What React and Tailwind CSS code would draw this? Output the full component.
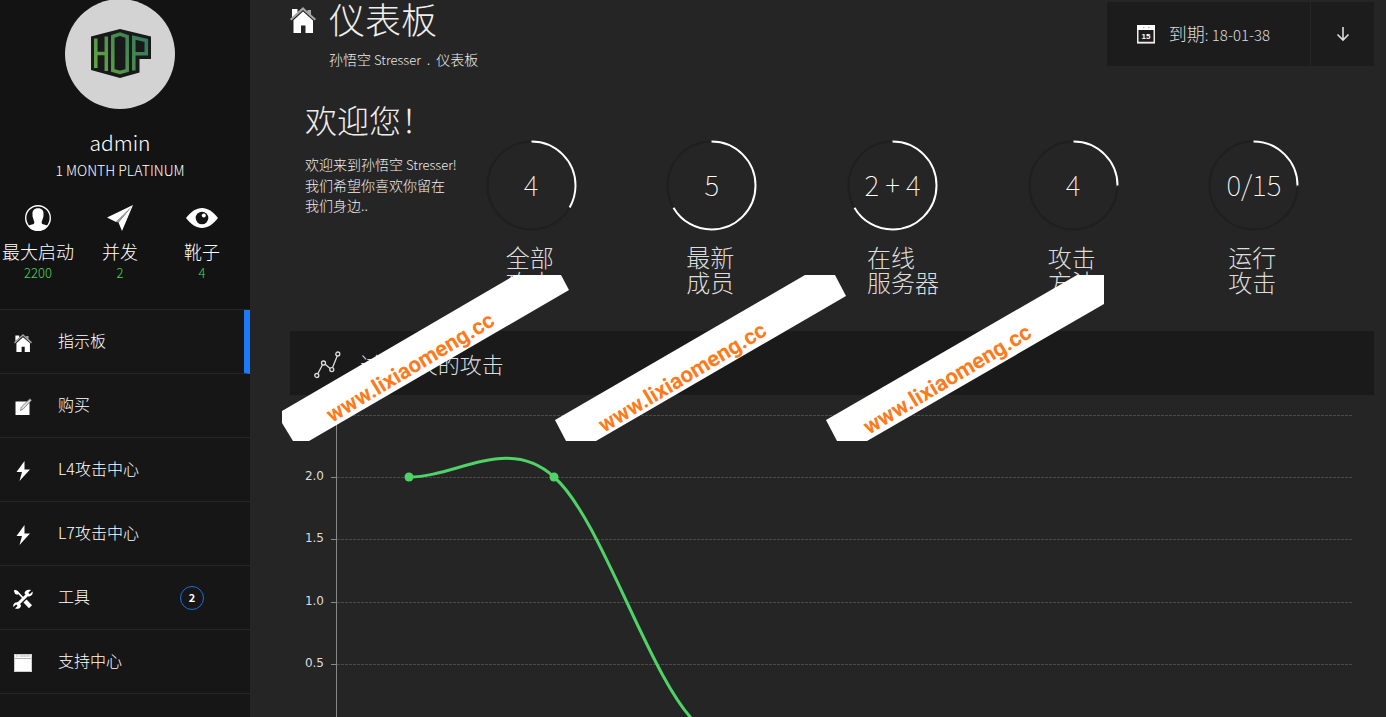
import React from 'react';

const HomeIcon = ({ className }) => (
  <svg viewBox="0 0 26 26" className={className} fill="currentColor" aria-hidden="true">
    <path d="M13 0 0 12l1.400 1.600L13 3l11.600 10.600L26 12l-5-4.600V3h-3.500v1.500z" opacity=".6" />
    <path d="M2 2h5.500v3.200L2 10.200z" />
    <path d="M13 4.600 3.500 13.200V26H11v-7.500h4.500V26h7.500V13.400z" />
  </svg>
);

const EditIcon = ({ className }) => (
  <svg viewBox="0 0 18 18" className={className} aria-hidden="true">
    <path d="M1.500 3.500h14V17h-14z" fill="#fff" />
    <path d="M6.500 12.500l.8-3.500L16 .8l1.400 1.400-8.300 9z" fill="#ddd" stroke="#777" strokeWidth=".8" />
  </svg>
);

const BoltIcon = ({ className }) => (
  <svg viewBox="0 0 18 20" className={className} fill="currentColor" aria-hidden="true">
    <path d="M10.500 0 2.500 11H8L5.500 20 16 8.500h-5.500z" />
  </svg>
);

const ToolsIcon = ({ className }) => (
  <svg viewBox="0 0 20 20" className={className} aria-hidden="true">
    <path d="M2 2l2 .5L11 10" stroke="#fff" strokeWidth="1.800" fill="none" />
    <path d="M.8 1.800 2 .8l3.200 2L5.600 5l-1.400.8-2-.8z" fill="#fff" />
    <path d="M12 12l5.500 5.800" stroke="#fff" strokeWidth="4.200" />
    <path d="M4 16 15.500 4.500" stroke="#fff" strokeWidth="3" />
    <path
      d="M18 1 15.500 3.500l.3 1.200 1.200.3 2.500-2.500c1 3.500-2 5.500-4.800 4.700L11.500 4.500C11.500 1.500 15 0 18 1zM2 19.500l2.500-2.500-.3-1.200-1.200-.3L.4 18c-1-3 2-5.500 4.800-4.700l2.700 2.700C8.500 19 5 20.500 2 19.500z"
      fill="#fff"
    />
  </svg>
);

const WindowIcon = ({ className }) => (
  <svg viewBox="0 0 18 18" className={className} aria-hidden="true">
    <path d="M0 0h18v18H0z" fill="#fff" />
    <path d="M0 4.500h18M2 2h2M5.500 2H16" stroke="#aaa" strokeWidth=".9" />
    <path d="M.5 .5h17v17H.5z" fill="none" stroke="#ccc" />
  </svg>
);

const UserIcon = ({ className }) => (
  <svg viewBox="0 0 26 26" className={className} aria-hidden="true">
    <circle cx="13" cy="13" r="12.300" fill="none" stroke="#fff" strokeWidth="1.400" />
    <path
      d="M13 3.200c-4 0-5.800 2.600-5.500 6 .1 1.200-.2 1.700.3 3 .4 1 .8 3 1.400 4.200.5 1.800-.4 2.800-2.300 3.200L3 20.700C6 25 9.500 25.800 13 25.800s7-.8 10-5.100l-3.900-1.100c-1.900-.4-2.800-1.400-2.300-3.200.6-1.200 1-3.200 1.400-4.200.5-1.300.2-1.800.3-3 .3-3.400-1.500-6-5.500-6z"
      fill="#fff"
    />
  </svg>
);

const PlaneIcon = ({ className }) => (
  <svg viewBox="0 0 26 26" className={className} aria-hidden="true">
    <path d="M26 0 0 12.500l9 4.500L23.500 3 11.500 17.500l3.500 8.500z" fill="#fff" />
    <path d="M9 17 25.500.8 11.500 17.500z" fill="#999" />
  </svg>
);

const EyeIcon = ({ className }) => (
  <svg viewBox="0 0 32 20" className={className} aria-hidden="true">
    <path d="M0 10C5 3.500 10.500 0 16 0s11 3.500 16 10c-5 6.500-10.500 10-16 10S5 16.500 0 10z" fill="#fff" />
    <circle cx="16" cy="10" r="6.300" fill="#141414" />
    <circle cx="17.800" cy="7.600" r="2" fill="#fff" />
  </svg>
);

const CalendarIcon = ({ className }) => (
  <svg viewBox="0 0 18 19" className={className} aria-hidden="true">
    <path d="M.75 1h16.500v16.500H.75z" fill="none" stroke="#eee" strokeWidth="1.500" />
    <path d="M0 0h18v5H0z" fill="#fff" />
    <path d="M6 2.500h1.500M11 2.500h1.500" stroke="#aaa" />
    <path d="M0 18.500h18" stroke="#999" />
    <text x="9" y="14" textAnchor="middle" fill="#fff" fontSize="8" fontWeight="700" fontFamily="Liberation Sans, sans-serif">
      15
    </text>
  </svg>
);

const GraphIcon = ({ className }) => (
  <svg viewBox="0 0 28 28" className={className} fill="none" stroke="#ddd" strokeWidth="1.300" aria-hidden="true">
    <circle cx="2.800" cy="24.500" r="2" />
    <circle cx="9.500" cy="12" r="2" />
    <circle cx="17.800" cy="18.600" r="2" />
    <circle cx="23.800" cy="3" r="2" />
    <path d="M3.800 22.700 8.500 13.800M11.100 13.300l5.100 4.100M18.500 16.700l4.700-11.800" />
  </svg>
);

const Avatar = () => (
  <svg viewBox="0 0 110 110" className="-mt-px size-[110px]" role="img" aria-label="HOP">
    <defs>
      <linearGradient id="hop" gradientUnits="userSpaceOnUse" x1="30" y1="72" x2="82" y2="40">
        <stop offset="0" stopColor="#66a63f" />
        <stop offset="1" stopColor="#34785a" />
      </linearGradient>
    </defs>
    <circle cx="55" cy="55" r="55" fill="#d3d3d3" />
    <path d="M55 30 86 37.500V60H74.500v13.500L55 79 26 71V37.500z" fill="#17191b" />
    <g stroke="url(#hop)" strokeWidth="3.500" fill="none">
      <path d="M30.800 39.500v29.500M41.300 37.500v34.500M31 54.500h10" />
      <path d="M47.800 37.500 55 35l7.200 2.500v34L55 73.500 47.800 71.500z" />
      <path d="M68.800 71.500V38.500l12.500 3v13.200H69" />
    </g>
  </svg>
);

const stats = [
  { label: '最大启动', value: '2200', icon: <UserIcon className="size-[26px]" /> },
  { label: '并发', value: '2', icon: <PlaneIcon className="size-[26px]" /> },
  { label: '靴子', value: '4', icon: <EyeIcon className="h-5 w-8" /> },
];

const menu = [
  { label: '指示板', icon: <HomeIcon className="size-[18px]" />, active: true },
  { label: '购买', icon: <EditIcon className="size-[18px]" /> },
  { label: 'L4攻击中心', icon: <BoltIcon className="h-5 w-[18px]" /> },
  { label: 'L7攻击中心', icon: <BoltIcon className="h-5 w-[18px]" /> },
  { label: '工具', icon: <ToolsIcon className="size-5" />, badge: 2 },
  { label: '支持中心', icon: <WindowIcon className="size-[18px]" /> },
];

const counters = [
  { value: '4', percent: 33.3, lines: ['全部', '攻击'] },
  { value: '5', percent: 66.6, lines: ['最新', '成员'] },
  { value: '2 + 4', percent: 66.6, lines: ['在线', '服务器'] },
  { value: '4', percent: 25, lines: ['攻击', '方法'] },
  { value: '0/15', percent: 25, lines: ['运行', '攻击'] },
];

const gridLines = [
  { y: 20, label: '' },
  { y: 82, label: '2.0' },
  { y: 144, label: '1.5' },
  { y: 207, label: '1.0' },
  { y: 269, label: '0.5' },
];

const ribbons = [
  { points: '282,411 515,275 561,275 569,290 309,441 293,441 282,423', x: 332, y: 423 },
  { points: '555,420 805,275 835,275 846,296 596,441 566,441', x: 604, y: 433 },
  { points: '826,420 1077,275 1104,275 1104,304 867,441 837,441', x: 869, y: 435 },
];

const Sidebar = () => (
  <aside className="w-[250px] shrink-0 bg-[#161616]">
    <div className="flex h-[309px] flex-col items-center bg-[#131313] pr-2.5">
      <Avatar />
      <h2 className="mt-[19px] text-[21px] font-light leading-7">admin</h2>
      <p className="mt-1 text-sm font-light leading-5">1 MONTH PLATINUM</p>
      <ul className="mt-[22px] flex gap-2.5">
        {stats.map((stat) => (
          <li key={stat.label} className="flex w-[72px] flex-col items-center">
            <span className="flex h-8 items-center">{stat.icon}</span>
            <span className="mt-[5px] whitespace-nowrap text-lg font-light leading-6">{stat.label}</span>
            <span className="text-[13px] font-light leading-5 text-[#43d554]">{stat.value}</span>
          </li>
        ))}
      </ul>
    </div>
    <nav className="border-t border-[#262626]">
      {menu.map((item) => (
        <a
          key={item.label}
          href="#"
          className={
            item.active
              ? 'flex h-16 items-center border-b border-b-[#262626] border-r-6 border-r-[#1b7af8] pl-3'
              : 'flex h-16 items-center border-b border-[#262626] pl-3'
          }
        >
          <span className="mt-[3px] flex w-[21px] justify-center">{item.icon}</span>
          <span className="ml-[25px] w-[122px] pb-1 text-base font-light">{item.label}</span>
          {item.badge && (
            <span className="flex size-6 items-center justify-center rounded-full border border-[#1b6fdc] pb-px text-[11px] font-bold">
              {item.badge}
            </span>
          )}
        </a>
      ))}
    </nav>
  </aside>
);

const Counter = ({ value, percent, lines }) => (
  <div className="pl-[15px] pt-[38px]">
    <div className="relative flex size-[91px] items-center justify-center pb-1">
      <svg viewBox="0 0 91 91" className="absolute inset-0" fill="none" strokeWidth="2" aria-hidden="true">
        <circle cx="45.500" cy="45.500" r="44" stroke="#1f1f1f" />
        <circle
          cx="45.500"
          cy="45.500"
          r="44"
          stroke="#fff"
          pathLength="100"
          strokeDasharray={`${percent} 100`}
          transform="rotate(-90 45.500 45.500)"
        />
      </svg>
      <span className="whitespace-nowrap text-[28px] font-thin leading-none">{value}</span>
    </div>
    <h3 className="mt-[13px] pl-5 text-2xl font-light leading-[25px] text-[#ddd]">
      {lines[0]}
      <br />
      {lines[1]}
    </h3>
  </div>
);

const Chart = () => (
  <svg className="h-[322px] w-full" aria-label="过去7天的攻击" role="img">
    {gridLines.map((line) => (
      <g key={line.y}>
        <path d={`M41 ${line.y + 0.5}h5`} stroke="#888" />
        <line x1="47" x2="98%" y1={line.y + 0.5} y2={line.y + 0.5} stroke="#4a4a4a" strokeDasharray="3 1" />
        <text x="34" y={line.y + 3} textAnchor="end" fill="#ddd" fontSize="12" fontFamily="DejaVu Sans, sans-serif">
          {line.label}
        </text>
      </g>
    ))}
    <path d="M46.500 20v302" stroke="#888" />
    <g transform="translate(-290 -395)">
      <path
        d="M409 477C457 477 508 435 554 477C602 518.500 651 684.500 699 726"
        fill="none"
        stroke="#50d366"
        strokeWidth="3"
      />
      <circle cx="409" cy="477" r="4.500" fill="#50d366" />
      <circle cx="554" cy="477" r="4.500" fill="#50d366" />
    </g>
  </svg>
);

const Ribbons = () => (
  <svg className="pointer-events-none absolute inset-0 size-full">
    {ribbons.map((ribbon) => (
      <g key={ribbon.x}>
        <polygon points={ribbon.points} fill="#fff" />
        <text
          transform={`translate(${ribbon.x} ${ribbon.y}) rotate(-31)`}
          fill="#ff7a1a"
          fontSize="22"
          fontWeight="700"
          fontFamily="Roboto, sans-serif"
        >
          www.lixiaomeng.cc
        </text>
      </g>
    ))}
  </svg>
);

const App = () => (
  <div className="relative flex h-screen overflow-hidden bg-[#252525] font-['Noto_Sans_CJK_SC',sans-serif] text-white">
    <Sidebar />
    <main className="min-w-0 flex-1 pl-10 pr-3">
      <header className="flex h-[74px] items-start justify-between">
        <div className="flex gap-[13px]">
          <HomeIcon className="mt-[7px] size-[26px]" />
          <div>
            <h1 className="text-4xl font-light leading-9 text-[#eee]">仪表板</h1>
            <p className="mt-[13px] text-sm font-light leading-5 text-[#eee]">
              孙悟空 <span className="text-[13px]">Stresser</span>
              <span className="px-1.5">.</span>仪表板
            </p>
          </div>
        </div>
        <div className="mt-0.5 flex h-16 gap-px text-[#ddd]">
          <button type="button" className="flex items-center bg-[#1c1c1c] pl-[30px] pr-10">
            <CalendarIcon className="mr-3.5 h-[19px] w-[18px]" />
            <span className="pb-0.5 text-lg font-light">
              到期<span className="text-[15px]">: 18-01-38</span>
            </span>
          </button>
          <button type="button" aria-label="下载" className="flex w-[63px] items-center justify-center bg-[#1c1c1c]">
            <svg viewBox="0 0 14 16" className="h-4 w-3.5" fill="none" stroke="currentColor" strokeWidth="1.600" aria-hidden="true">
              <path d="M7 1v13M1.500 8.500 7 14l5.500-5.500" />
            </svg>
          </button>
        </div>
      </header>

      <section className="mt-7 grid h-[229px] grid-cols-6">
        <div className="whitespace-nowrap pl-[15px]">
          <h2 className="text-[32px] font-light leading-[34px] text-[#eee]">欢迎您！</h2>
          <p className="mt-[18px] text-sm font-light leading-5 text-[#eee]">
            欢迎来到孙悟空 <span className="text-[13px]">Stresser!</span>
            <br />
            我们希望你喜欢你留在
            <br />
            我们身边..
          </p>
        </div>
        {counters.map((counter) => (
          <Counter key={counter.lines.join('')} {...counter} />
        ))}
      </section>

      <section>
        <div className="flex h-16 items-center bg-[#1a1a1a] pl-6">
          <GraphIcon className="mt-1 size-7" />
          <h2 className="ml-[18px] text-[22px] font-light text-[#ddd]">过去7天的攻击</h2>
        </div>
        <Chart />
      </section>
    </main>
    <Ribbons />
  </div>
);

export default App;
